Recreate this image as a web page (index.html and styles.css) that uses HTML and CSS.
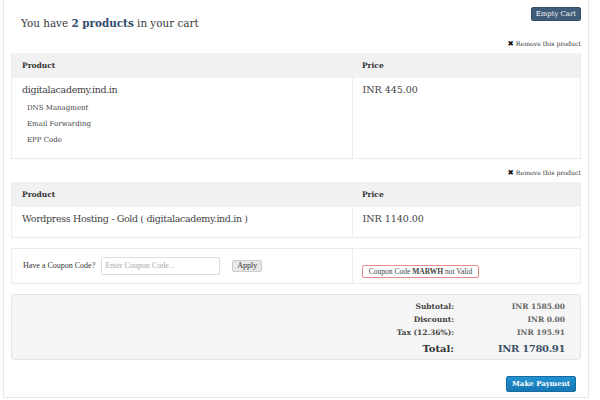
FILE: index.html
```html
<!DOCTYPE html>
<html>
<head>
<meta charset="utf-8">
<link rel="stylesheet" href="styles.css">
</head>
<body>
<div class="page">
  <div class="top">
    <h1 class="title">You have <b>2 products</b> in your cart</h1>
    <button class="btn-empty">Empty Cart</button>
  </div>

  <div class="remove"><span class="x">✖</span> Remove this product</div>
  <table class="cart">
    <thead><tr><th class="c1">Product</th><th class="c2">Price</th></tr></thead>
    <tbody>
      <tr class="row-tall">
        <td class="c1">
          <div class="pname">digitalacademy.ind.in</div>
          <ul class="addons">
            <li>DNS Managment</li>
            <li>Email Forwarding</li>
            <li>EPP Code</li>
          </ul>
        </td>
        <td class="c2"><div class="price">INR 445.00</div></td>
      </tr>
    </tbody>
  </table>

  <div class="remove"><span class="x">✖</span> Remove this product</div>
  <table class="cart">
    <thead><tr><th class="c1">Product</th><th class="c2">Price</th></tr></thead>
    <tbody>
      <tr class="row-short">
        <td class="c1"><div class="pname">Wordpress Hosting - Gold ( digitalacademy.ind.in )</div></td>
        <td class="c2"><div class="price">INR 1140.00</div></td>
      </tr>
    </tbody>
  </table>

  <div class="coupon">
    <div class="coupon-left">
      <label class="clabel">Have a Coupon Code?</label>
      <input class="cinput" type="text" placeholder="Enter Coupon Code...">
      <button class="apply">Apply</button>
    </div>
    <div class="coupon-right">
      <div class="cerror">Coupon Code <b>MARWH</b> not Valid</div>
    </div>
  </div>

  <div class="totals">
    <div class="lbl">Subtotal:</div><div class="val">INR 1585.00</div>
    <div class="lbl">Discount:</div><div class="val">INR 0.00</div>
    <div class="lbl">Tax (12.36%):</div><div class="val">INR 195.91</div>
    <div class="lbl big">Total:</div><div class="val big">INR 1780.91</div>
  </div>

  <div class="pay-row"><button class="pay">Make Payment</button></div>
</div>
</body>
</html>
```

FILE: styles.css
```css
* { box-sizing: border-box; }
html, body { margin: 0; padding: 0; background: #fff; }
body { font-family: "DejaVu Serif", serif; color: #444; }

.page {
  margin: 0 11px 0 3px;
  height: 398px;
  border: 1px solid #e6e6e6;
  border-top: none;
  padding: 0 7px;
}

.top {
  display: flex;
  justify-content: space-between;
  align-items: flex-start;
  padding-top: 7px;
  height: 30px;
}
.title {
  margin: 9px 0 0 10px;
  font-size: 10.4px;
  font-weight: normal;
  color: #3a3a3a;
  line-height: 14px;
}
.title b { color: #2f4c69; }
.btn-empty {
  font-family: "DejaVu Serif", serif;
  font-size: 6.9px;
  color: #fff;
  background: #3f5c78;
  border: 1px solid #35506a;
  border-radius: 2px;
  padding: 0 4px;
  height: 14px;
  line-height: 12px;
}

.remove {
  text-align: right;
  font-size: 6.2px;
  color: #333;
  margin-top: 9px;
  height: 10px;
  line-height: 10px;
}
.remove .x { font-family: "DejaVu Sans", sans-serif; font-size: 7.5px; color: #111; }

.cart {
  width: 100%;
  border-collapse: collapse;
  margin-top: 4px;
  border: 1px solid #ececec;
  border-top: none;
}
.cart th {
  background: #f1f1f1;
  text-align: left;
  font-size: 7.5px;
  font-weight: bold;
  color: #333;
  height: 25px;
  padding: 0 10px;
}
.cart th.c2 { padding-left: 9px; }
.cart .c1 { width: 60%; }
.cart td {
  vertical-align: top;
  padding: 6px 10px 0;
}
.cart td.c2 { border-left: 1px solid #ececec; padding-left: 9px; }
.pname { font-size: 9.5px; letter-spacing: -0.35px; color: #444; line-height: 12px; }
.price { font-size: 9.5px; color: #444; line-height: 12px; }
.addons {
  list-style: none;
  margin: 4px 0 10px 5px;
  padding: 0;
  font-size: 7px;
  color: #444;
}
.addons li { height: 16px; line-height: 16px; }
.row-tall { height: 80px; }
.row-short { height: 30px; }

.coupon {
  margin-top: 10px;
  display: flex;
  border: 1px solid #ececec;
  height: 36px;
}
.coupon-left {
  width: 60%;
  display: flex;
  align-items: center;
  padding-left: 11px;
  font-family: "Liberation Serif", serif;
  border-right: 1px solid #ececec;
}
.clabel { font-size: 8px; color: #333; }
.cinput {
  margin-left: 6px;
  width: 119px;
  height: 18px;
  border: 1px solid #ddd;
  border-radius: 2px;
  font-family: "Liberation Serif", serif;
  font-size: 8px;
  padding: 0 3px;
  color: #999;
}
.cinput::placeholder { color: #aaa; }
.apply {
  margin-left: 12px;
  font-family: "Liberation Serif", serif;
  font-size: 8px;
  height: 12px;
  padding: 0 4px;
  line-height: 10px;
  background: #e8e8e8;
  border: 1px solid #ccc;
  border-radius: 2px;
  color: #333;
}
.coupon-right {
  flex: 1;
  padding: 16px 0 0 9px;
}
.cerror {
  width: fit-content;
  font-family: "Liberation Serif", serif;
  font-size: 7.5px;
  color: #444;
  border: 1px solid #e78a8a;
  border-radius: 2px;
  height: 13px;
  line-height: 11px;
  padding: 0 6px;
}

.totals {
  margin-top: 10px;
  background: #f5f5f5;
  border: 1px solid #e4e4e4;
  border-radius: 3px;
  height: 66px;
  display: grid;
  grid-template-columns: 1fr 111px;
  align-content: start;
  padding: 5px 15px 0 0;
  font-weight: bold;
  font-size: 7.5px;
  color: #444;
}
.totals .lbl { text-align: right; line-height: 13px; }
.totals .val { text-align: right; line-height: 13px; color: #666; }
.totals .big { font-size: 10px; line-height: 20px; color: #333; }
.totals .val.big { color: #3d5166; letter-spacing: -0.35px; }

.pay-row {
  display: flex;
  justify-content: flex-end;
  padding-right: 5px;
  margin-top: 16px;
}
.pay {
  font-family: "DejaVu Serif", serif;
  font-weight: bold;
  font-size: 7px;
  color: #fff;
  background: linear-gradient(#2391d0, #1677b3);
  border: 1px solid #146ca3;
  border-radius: 2px;
  height: 16px;
  padding: 0 5px;
}
```
